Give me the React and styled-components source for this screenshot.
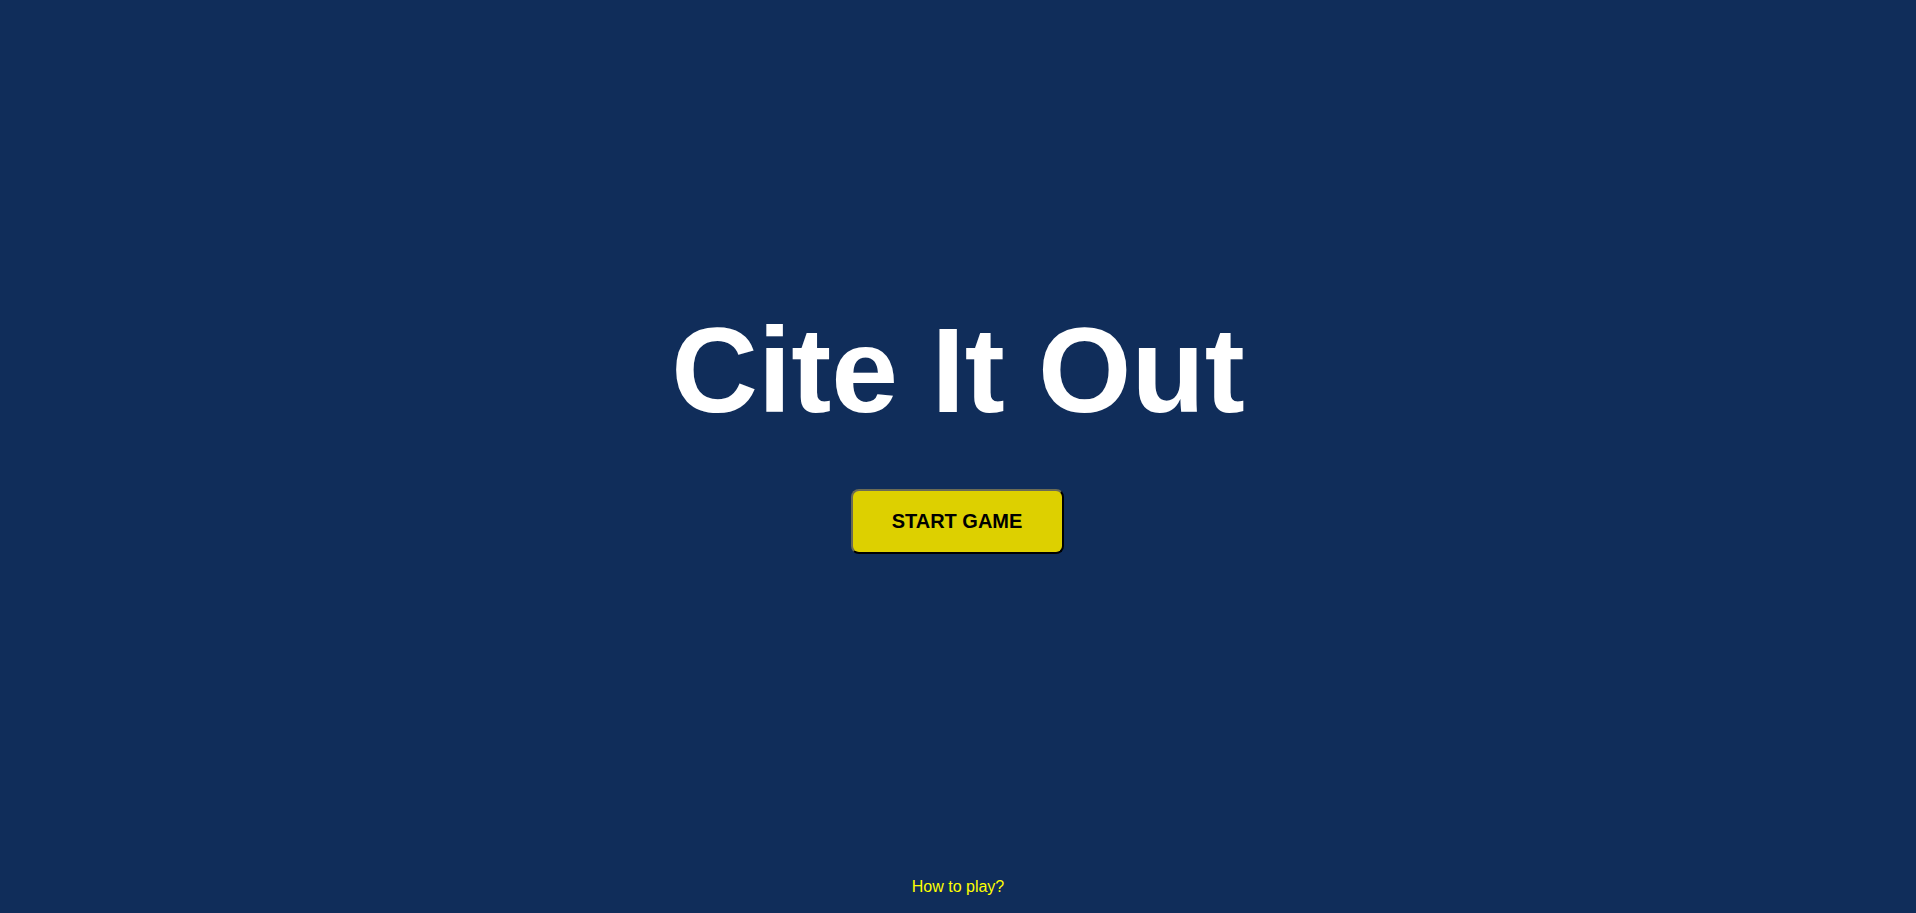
import React from "react";
import styled, { createGlobalStyle } from "styled-components";

const GlobalStyle = createGlobalStyle`
  html, body {
    margin: 0;
    padding: 0;
    background: #102d5a;
  }
  body {
    font-family: "Liberation Sans", Arial, sans-serif;
  }
`;

const Page = styled.div`
  min-height: 100vh;
  display: flex;
  flex-direction: column;
  align-items: center;
  background: #102d5a;
  box-sizing: border-box;
`;

const Main = styled.main`
  flex: 1;
  display: flex;
  flex-direction: column;
  align-items: center;
  padding-top: 301px;
`;

const Title = styled.h1`
  margin: 0;
  font-family: "Liberation Sans", Arial, sans-serif;
  font-size: 120px;
  font-weight: 700;
  line-height: 138px;
  color: #ffffff;
`;

const StartButton = styled.button`
  margin-top: 50px;
  margin-right: 2px;
  width: 213px;
  height: 65px;
  background: #ddd000;
  color: #000000;
  font-family: "Liberation Sans", Arial, sans-serif;
  font-size: 20px;
  font-weight: 700;
  border: 2px outset #555555;
  border-color: #6b6b55 #111111 #111111 #6b6b55;
  border-radius: 8px;
  cursor: pointer;
`;

const Footer = styled.footer`
  padding-bottom: 17px;
`;

const HelpLink = styled.a`
  font-family: "Liberation Sans", Arial, sans-serif;
  font-size: 16px;
  color: #ffff00;
  text-decoration: none;
  cursor: pointer;
`;

export default function App() {
  return (
    <>
      <GlobalStyle />
      <Page>
        <Main>
          <Title>Cite It Out</Title>
          <StartButton>START GAME</StartButton>
        </Main>
        <Footer>
          <HelpLink>How to play?</HelpLink>
        </Footer>
      </Page>
    </>
  );
}
